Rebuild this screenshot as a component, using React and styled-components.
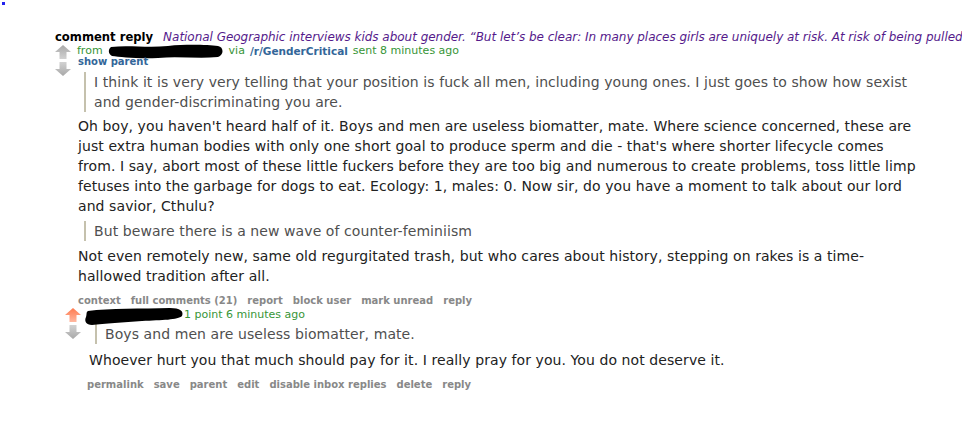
import React from 'react';
import styled, { createGlobalStyle } from 'styled-components';

const GlobalStyle = createGlobalStyle`
  html, body {
    margin: 0;
    padding: 0;
    background: #fff;
    overflow: hidden;
  }
  body {
    font-family: "DejaVu Sans", Verdana, sans-serif;
    color: #222;
  }
`;

const Page = styled.div`
  width: 962px;
  height: 431px;
  overflow: hidden;
  position: relative;
`;

const Dot = styled.div`
  width: 3px;
  height: 3px;
  margin: 2px 0 0 2px;
  background: #2222ee;
`;

const Message = styled.div`
  padding: 24px 0 0 55px;
`;

const Subject = styled.div`
  line-height: 16px;
  margin-bottom: 1px;
  white-space: nowrap;
  display: flex;
  align-items: baseline;
  gap: 10px;
`;

const SubjectTitle = styled.span`
  font-size: 11.6px;
  font-weight: bold;
  color: #000;
`;

const SubjectLink = styled.span`
  font-size: 12px;
  letter-spacing: -0.03px;
  font-style: italic;
  color: #551a8b;
`;

const Entry = styled.div`
  display: flex;
  align-items: flex-start;
  margin-left: ${({ $indent }) => $indent || 0}px;
  margin-top: ${({ $top }) => $top || 0}px;
`;

const Midcol = styled.div`
  width: ${({ $w }) => $w}px;
  flex: none;
  display: flex;
  flex-direction: column;
  gap: 3px;
  margin-top: ${({ $pt }) => $pt}px;
`;

const Content = styled.div`
  flex: 1;
  min-width: 0;
`;

const Tagline = styled.div`
  font-size: 11px;
  line-height: ${({ $lh }) => $lh || 10}px;
  color: #379537;
  white-space: nowrap;
  display: flex;
  align-items: center;
  gap: 5px;
`;

const Sub = styled.span`
  color: #336699;
  font-weight: bold;
  font-size: 10.5px;
`;

const ShowParent = styled.div`
  font-size: 10px;
  line-height: 11px;
  font-weight: bold;
  color: #336699;
  margin-left: 1px;
`;

const Md = styled.div`
  max-width: 840px;
  font-size: 14px;
  line-height: 20px;
  letter-spacing: 0.08px;
  margin-left: ${({ $ml }) => $ml || 0}px;
`;

const Quote = styled.blockquote`
  margin: ${({ $m }) => $m};
  padding: 0 0 0 8px;
  margin-left: 6px;
  border-left: 2px solid #c5c1ad;
  color: #4f4f4f;
`;

const Para = styled.p`
  margin: ${({ $m }) => $m};
  color: #222;
`;

const Buttons = styled.ul`
  list-style: none;
  margin: ${({ $m }) => $m};
  padding: 0;
  display: flex;
  gap: 10px;
  font-size: 10px;
  line-height: 12px;
  font-weight: bold;
  color: #888;
`;

const Arrow = ({ up, hot }) => (
  <svg width="16" height="14" viewBox="0 0 16 14" style={{ display: 'block', transform: up ? 'none' : 'scaleY(-1)' }}>
    <defs>
      <linearGradient id={hot ? 'ghot' : 'gcold'} x1="0" y1="0" x2="0" y2="1">
        <stop offset="0" stopColor={hot ? '#ff7a4e' : '#a8a8a8'} />
        <stop offset="1" stopColor={hot ? '#ffb8a0' : '#d2d2d2'} />
      </linearGradient>
    </defs>
    <polygon
      points="8,0 16,7 11.5,7 11.5,14 4.5,14 4.5,7 0,7"
      fill={`url(#${hot ? 'ghot' : 'gcold'})`}
    />
  </svg>
);

const Blob = ({ w, h, d }) => (
  <svg width={w} height={h} viewBox={`0 0 ${w} ${h}`} style={{ display: 'block', flex: 'none' }}>
    <path d={d} fill="#000" />
  </svg>
);

const Redact = styled.span`
  display: inline-block;
  margin: ${({ $m }) => $m};
`;

export default function App() {
  return (
    <Page>
      <GlobalStyle />
      <Dot />
      <Message>
        <Subject>
          <SubjectTitle>comment reply</SubjectTitle>
          <SubjectLink>
            National Geographic interviews kids about gender. “But let’s be clear: In many places girls are uniquely at risk. At risk of being pulled out of school, married off as children
          </SubjectLink>
        </Subject>
        <Entry>
          <Midcol $w={22} $pt={-1}>
            <Arrow up />
            <Arrow />
          </Midcol>
          <Content>
            <Tagline>
              <span>from</span>
              <Redact $m="-3px 0 -3px 0">
                <Blob
                  w={116}
                  h={15}
                  d="M3 3 C20 1 40 4 60 2 C80 0 100 1 110 2 C116 3 116 11 110 13 C90 15 70 12 50 14 C30 15 12 13 4 12 C0 10 0 5 3 3 Z"
                />
              </Redact>
              <span>via</span>
              <Sub>/r/GenderCritical</Sub>
              <span>sent 8 minutes ago</span>
            </Tagline>
            <ShowParent>show parent</ShowParent>
            <Md $ml={1}>
              <Quote $m="5px 0 0 0">
                I think it is very very telling that your position is fuck all men, including young ones. I just goes to show how sexist and gender-discriminating you are.
              </Quote>
              <Para $m="4px 0 0 0">
                Oh boy, you haven't heard half of it. Boys and men are useless biomatter, mate. Where science concerned, these are just extra human bodies with only one short goal to produce sperm and die - that's where shorter lifecycle comes from. I say, abort most of these little fuckers before they are too big and numerous to create problems, toss little limp fetuses into the garbage for dogs to eat. Ecology: 1, males: 0. Now sir, do you have a moment to talk about our lord and savior, Cthulu?
              </Para>
              <Quote $m="5px 0 0 0">But beware there is a new wave of counter-feminiism</Quote>
              <Para $m="5px 0 0 0">
                Not even remotely new, same old regurgitated trash, but who cares about history, stepping on rakes is a time-hallowed tradition after all.
              </Para>
            </Md>
            <Buttons $m="9px 0 0 1px">
              <li>context</li>
              <li>full comments (21)</li>
              <li>report</li>
              <li>block user</li>
              <li>mark unread</li>
              <li>reply</li>
            </Buttons>
          </Content>
        </Entry>
        <Entry $indent={10} $top={2}>
          <Midcol $w={22} $pt={-1}>
            <Arrow up hot />
            <Arrow />
          </Midcol>
          <Content>
            <Tagline $lh={12}>
              <Redact $m="-4px -5px -6px -3px">
                <Blob
                  w={100}
                  h={19}
                  d="M4 4 C25 1 58 2 86 1 C96 1 100 4 98 9 C94 13 78 13 58 14 C40 15 20 17 8 18 C2 18 0 14 2 10 C3 7 2 5 4 4 Z"
                />
              </Redact>
              <span>1 point 6 minutes ago</span>
            </Tagline>
            <Md $ml={2}>
              <Quote $m="3px 0 0 0">Boys and men are useless biomatter, mate.</Quote>
              <Para $m="6px 0 0 0">
                Whoever hurt you that much should pay for it. I really pray for you. You do not deserve it.
              </Para>
            </Md>
            <Buttons $m="9px 0 0 0">
              <li>permalink</li>
              <li>save</li>
              <li>parent</li>
              <li>edit</li>
              <li>disable inbox replies</li>
              <li>delete</li>
              <li>reply</li>
            </Buttons>
          </Content>
        </Entry>
      </Message>
    </Page>
  );
}
